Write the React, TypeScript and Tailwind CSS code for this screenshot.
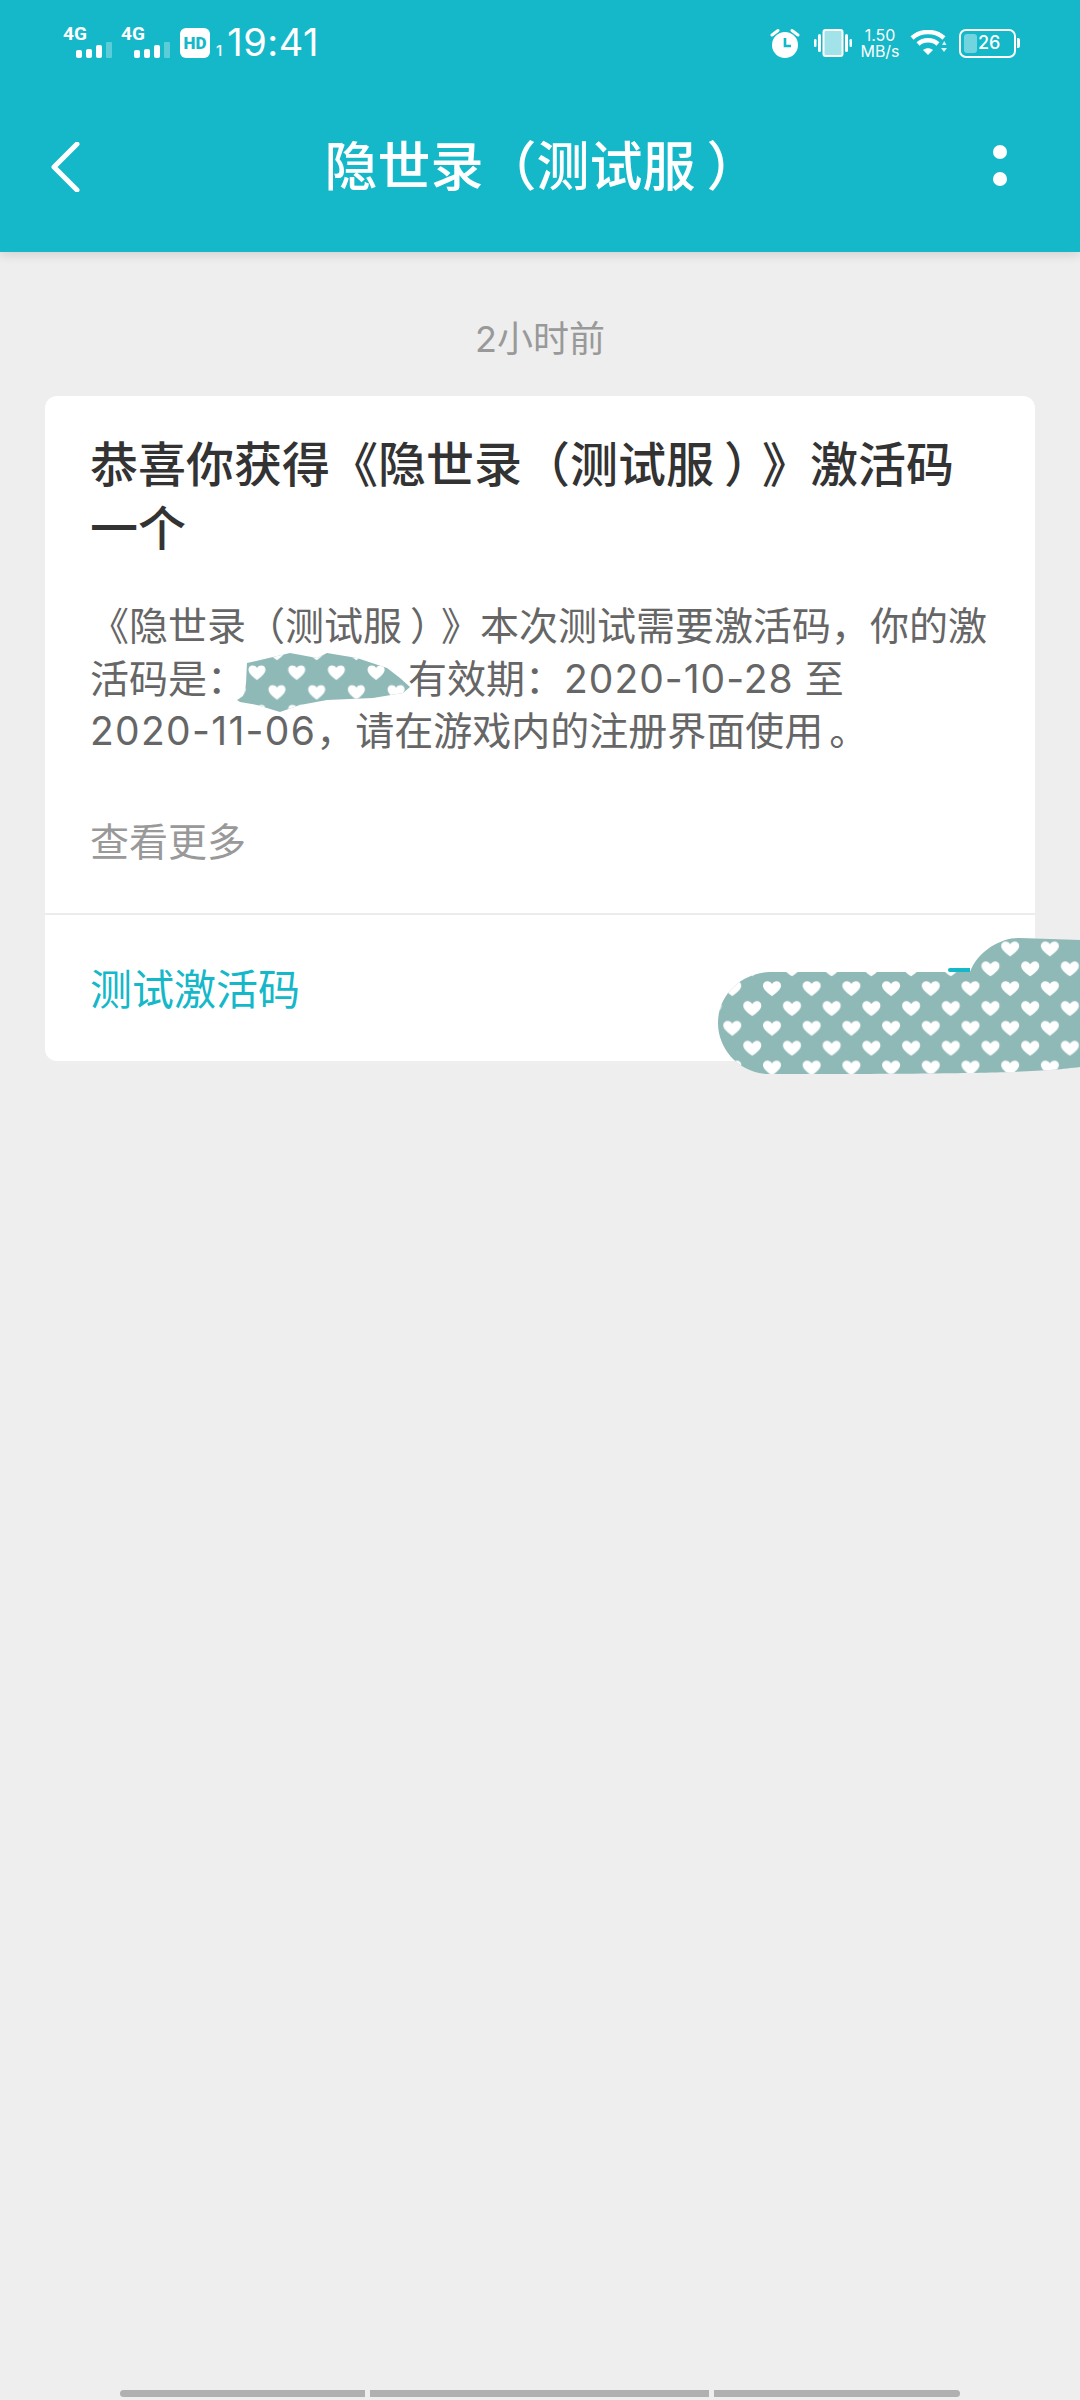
const cjk = "font-['Inter','Noto_Sans_CJK_SC',sans-serif] [text-spacing-trim:space-all]";

function SignalBars() {
  return (
    <div className="flex flex-col items-start">
      <span className="text-[19px] leading-[16px] font-bold text-white font-['Roboto',sans-serif] -ml-[1px]">4G</span>
      <div className="flex items-end gap-[4px] ml-[12px]">
        <div className="w-[6px] h-[8px] rounded-[2px] bg-white" />
        <div className="w-[6px] h-[9px] rounded-[2px] bg-white" />
        <div className="w-[6px] h-[13px] rounded-[2px] bg-white" />
        <div className="w-[6px] h-[16px] rounded-[1px] bg-white/30" />
      </div>
    </div>
  );
}

function AlarmIcon() {
  return (
    <svg width="30" height="30" viewBox="0 0 30 30">
      <circle cx="15" cy="17" r="13" fill="#fff" />
      <path d="M2 7 L8 2.500 M28 7 L22 2.500" stroke="#fff" strokeWidth="3" strokeLinecap="round" />
      <path d="M15 10 V18 H21" fill="none" stroke="#14b8c8" strokeWidth="2.600" />
    </svg>
  );
}

function VibrateIcon() {
  return (
    <svg width="38" height="28" viewBox="0 0 38 28">
      <rect x="9.500" y="1" width="19" height="26" rx="2" fill="#fff" fillOpacity="0.6" stroke="#fff" strokeWidth="2" />
      <rect x="4" y="5" width="3" height="18" rx="1.500" fill="#fff" />
      <rect x="0" y="10" width="2.500" height="8" rx="1.200" fill="#fff" />
      <rect x="31" y="5" width="3" height="18" rx="1.500" fill="#fff" />
      <rect x="35.500" y="10" width="2.500" height="8" rx="1.200" fill="#fff" />
    </svg>
  );
}

function WifiIcon() {
  return (
    <svg width="38" height="26" viewBox="0 0 38 26">
      <path d="M2 8 C11 0 25 0 34 8" fill="none" stroke="#fff" strokeWidth="4.500" />
      <path d="M8 14 C13.500 9 22.500 9 28 14" fill="none" stroke="#fff" strokeWidth="4.500" />
      <path d="M13 20 L18 25 L23 20 C20 17.500 16 17.500 13 20 Z" fill="#fff" />
      <path d="M32 15 L36.500 15 L34.200 11 Z M31 18 L37 18 L34 22 Z" fill="#fff" fillOpacity="0.85" />
    </svg>
  );
}

function Battery() {
  return (
    <div className="flex items-center">
      <div className="relative w-[57px] h-[29px] rounded-[7px] border-2 border-white flex items-center">
        <div className="absolute left-[3px] top-[3px] bottom-[3px] w-[13px] rounded-[3px] bg-white/40" />
        <span className="ml-[17px] text-[18px] leading-none font-medium text-white">26</span>
      </div>
      <div className="w-[3px] h-[10px] ml-[1px] rounded-r-[2px] bg-white" />
    </div>
  );
}

function StatusBar() {
  return (
    <div className="h-[85px] flex items-start justify-between pt-[25px] pl-[64px] pr-[60px] text-white">
      <div className="flex items-center">
        <SignalBars />
        <div className="ml-[10px]">
          <SignalBars />
        </div>
        <div className="ml-[10px] mt-[2px] w-[30px] h-[30px] rounded-[6px] bg-white flex items-center justify-center">
          <span className="text-[17px] leading-none font-black text-[#14b8c8] font-['Roboto',sans-serif]">HD</span>
        </div>
        <span className="ml-[6px] mt-[17px] text-[15px] leading-none font-medium">1</span>
        <span className="ml-[5px] text-[38px] leading-[34px] tracking-[0.500px]">19:41</span>
      </div>
      <div className="flex items-center pt-[2px]">
        <AlarmIcon />
        <div className="ml-[14px]">
          <VibrateIcon />
        </div>
        <div className="ml-[8px] w-[40px] flex flex-col items-center">
          <span className="text-[16px] leading-[16px]">1.50</span>
          <span className="text-[16px] leading-[16px]">MB/s</span>
        </div>
        <div className="ml-[10px]">
          <WifiIcon />
        </div>
        <div className="ml-[11px]">
          <Battery />
        </div>
      </div>
    </div>
  );
}

function Header() {
  return (
    <header className="h-[252px] bg-[#14b8c8] shadow-[0_3px_10px_rgba(0,0,0,0.12)]">
      <StatusBar />
      <div className="flex items-center justify-between h-[164px] pl-[50px] pr-[73px]">
        <svg width="30" height="50" viewBox="0 0 30 50" fill="none">
          <path d="M27 2 L4 25 L27 48" stroke="#fff" strokeWidth="5" strokeLinecap="round" strokeLinejoin="round" />
        </svg>
        <h1 className="text-[53px] leading-none font-medium text-white whitespace-nowrap">
          隐世录（测试<span className="tracking-[11px]">服</span>
          <span className="tracking-[-11px]">）</span>
        </h1>
        <div className="flex flex-col gap-[13px] -mt-[3px]">
          <div className="w-[14px] h-[14px] rounded-full bg-white" />
          <div className="w-[14px] h-[14px] rounded-full bg-white" />
        </div>
      </div>
    </header>
  );
}

function Card() {
  return (
    <div className="mx-[45px] rounded-[12px] bg-white overflow-hidden">
      <div className="px-[45px] pt-[37px] h-[519px] border-b-2 border-[#ececec]">
        <h2 className="text-[48px] leading-[64px] font-medium text-[#333333]">
          恭喜你获得《隐世录（测试<span className="tracking-[10px]">服</span><span className="tracking-[-10px]">）</span>》激活码
          <br />
          一个
        </h2>
        <p className="mt-[39px] text-[39px] leading-[52.500px] text-[#666666]">
          《隐世录（测试<span className="tracking-[8px]">服</span><span className="tracking-[-8px]">）</span>》本次测试需要激活码，你的激
          <br />
          活码是：
          <span className="inline-block w-[162px]" />
          有效期：<span className="tracking-[1px]">2020-10-28</span> 至
          <br />
          <span className="tracking-[1.300px]">2020-11-06</span>，请在游戏内的注册界面使用<span className="ml-[6px]">。</span>
        </p>
        <p className="mt-[58px] text-[39px] leading-[52px] text-[#999999]">查看更多</p>
      </div>
      <div className="h-[146px] px-[45px] flex items-center pt-[4px]">
        <span className="text-[42px] leading-none text-[#14b8c8]">测试激活码</span>
      </div>
    </div>
  );
}

function ScribbleOverlays() {
  const smallBlob =
    "M237 700 L243 696 C247 688 246 676 247 663 L273 657 L290 653 L317 658 L327 653 L357 658 L387 668 L400 678 L410 687 L403 693 L373 698 L327 700 L300 705 L280 712 L257 705 L240 702 Z";
  const bigBlob =
    "M718 1023 C718 992 745 972 770 972 L970 972 C978 950 1003 937 1020 938 L1080 940 L1080 1067 C1040 1072 1000 1074 770 1074 C740 1074 718 1050 718 1023 Z";
  return (
    <>
      <svg className="absolute left-[230px] top-[645px]" width="190" height="75" viewBox="230 645 190 75">
        <defs>
          <pattern id="hearts-a" patternUnits="userSpaceOnUse" x="247" y="663" width="39.700" height="39.400">
            <path d="M10 17 C3.500 12.500 1.500 9.500 1.500 6.500 C1.500 3 5 1.500 8 3 C9 3.700 10 5 10 5 C10 5 11 3.700 12 3 C15 1.500 18.500 3 18.500 6.500 C18.500 9.500 16.500 12.500 10 17 Z" fill="#fff" />
            <path d="M30 36.700 C23.500 32.200 21.500 29.200 21.500 26.200 C21.500 22.700 25 21.200 28 22.700 C29 23.400 30 24.700 30 24.700 C30 24.700 31 23.400 32 22.700 C35 21.200 38.500 22.700 38.500 26.200 C38.500 29.200 36.500 32.200 30 36.700 Z" fill="#fff" />
          </pattern>
        </defs>
        <path d={smallBlob} fill="#8fb9b7" />
        <path d={smallBlob} fill="url(#hearts-a)" />
      </svg>
      <svg className="absolute left-[718px] top-[937px]" width="362" height="137" viewBox="718 937 362 137">
        <defs>
          <pattern id="hearts-b" patternUnits="userSpaceOnUse" x="762" y="979" width="39.700" height="39.700">
            <path d="M10 17 C3.500 12.500 1 9.500 1 6.500 C1 3 5 1 8 3 C9 3.700 10 5 10 5 C10 5 11 3.700 12 3 C15 1 19 3 19 6.500 C19 9.500 16.500 12.500 10 17 Z" fill="#fff" />
            <path d="M30 37 C23.500 32.500 21 29.500 21 26.500 C21 23 25 21 28 23 C29 23.700 30 25 30 25 C30 25 31 23.700 32 23 C35 21 39 23 39 26.500 C39 29.500 36.500 32.500 30 37 Z" fill="#fff" />
          </pattern>
        </defs>
        <path d={bigBlob} fill="#8fb9b7" />
        <path d={bigBlob} fill="url(#hearts-b)" />
      </svg>
      <div className="absolute left-[948px] top-[968px] w-[22px] h-[4px] rounded-l-[2px] bg-[#14b8c8]" />
    </>
  );
}

export default function App() {
  return (
    <div className={`relative w-[1080px] h-[2400px] overflow-hidden bg-[#eeeeee] ${cjk}`}>
      <Header />
      <div className="h-[144px] flex items-center justify-center pt-[29px]">
        <span className="text-[36px] leading-none text-[#999999]">2小时前</span>
      </div>
      <Card />
      <ScribbleOverlays />
      {/* bottom handle bars */}
      <div className="absolute left-[120px] top-[2390px] w-[840px] h-[7px] flex gap-[5px]">
        <div className="w-[245px] rounded-l-full bg-[#b0b0b0]" />
        <div className="w-[339px] bg-[#b0b0b0]" />
        <div className="flex-1 rounded-r-full bg-[#b0b0b0]" />
      </div>
    </div>
  );
}
